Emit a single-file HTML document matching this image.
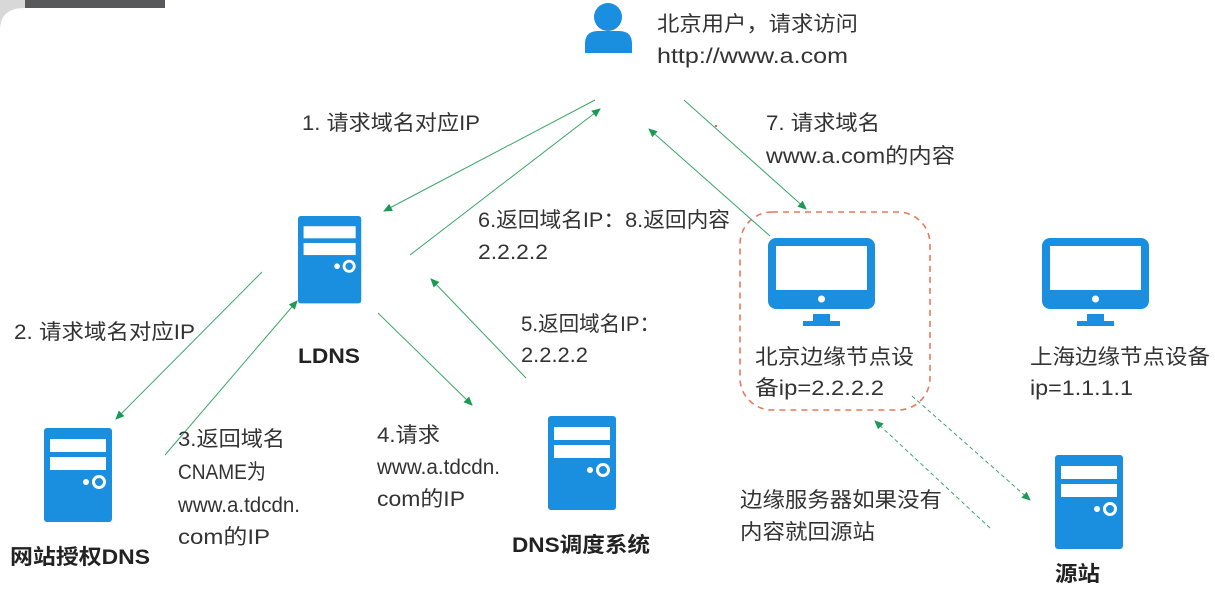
<!DOCTYPE html>
<html><head><meta charset="utf-8"><style>
html,body{margin:0;padding:0;background:#fff;}
svg{display:block;}
text{font-family:"Liberation Sans","Noto Sans CJK SC",sans-serif;fill:#333;font-size:21px;}
.b{font-weight:bold;fill:#222;}
</style></head><body>
<svg width="1215" height="592" viewBox="0 0 1215 592" xmlns="http://www.w3.org/2000/svg">
<defs>
<marker id="ah" markerWidth="10" markerHeight="10" refX="8" refY="5" orient="auto" markerUnits="userSpaceOnUse">
<path d="M0,1 L9,5 L0,9 Z" fill="#1a9a55"/></marker>
<g id="srv">
<rect x="0" y="0" width="68" height="94" rx="3" fill="#1a8fe0"/>
<rect x="6" y="11" width="56" height="13" fill="#fff"/>
<rect x="6" y="29" width="56" height="13" fill="#fff"/>
<circle cx="42" cy="54" r="3" fill="#fff"/>
<circle cx="55" cy="54" r="5.5" fill="none" stroke="#fff" stroke-width="3"/>
</g>
<g id="mon">
<rect x="0" y="0" width="107" height="71" rx="8" fill="#1a8fe0"/>
<rect x="8" y="8" width="91" height="44" fill="#fff"/>
<circle cx="53.5" cy="61" r="3.5" fill="#fff"/>
<rect x="45" y="76" width="17" height="9" fill="#1a8fe0"/>
<rect x="35" y="83" width="37" height="5" fill="#1a8fe0"/>
</g>
</defs>
<rect x="0" y="0" width="30" height="30" fill="#d8d8d8"/>
<path d="M0,30 Q0,8 25,8 L30,8 L30,30 Z" fill="#fff"/>
<rect x="25" y="0" width="140" height="8" fill="#58595b"/>

<circle cx="608" cy="17" r="14" fill="#1a8fe0"/>
<path d="M585,53 L585,44 Q585,31 598,31 L619,31 Q632,31 632,44 L632,53 Z" fill="#1a8fe0"/>

<use href="#srv" transform="translate(298,216) scale(0.93)"/>
<use href="#srv" x="44" y="428"/>
<use href="#srv" x="548" y="416"/>
<use href="#srv" x="1055" y="455"/>
<use href="#mon" x="768" y="238"/>
<use href="#mon" x="1042" y="238"/>

<rect x="740" y="212" width="190" height="198" rx="32" fill="none" stroke="#e8785a" stroke-width="1.6" stroke-dasharray="6,5"/>

<g stroke="#3aa66a" stroke-width="1" fill="none" marker-end="url(#ah)">
<line x1="595" y1="100" x2="384" y2="211"/>
<line x1="410" y1="255" x2="600" y2="109"/>
<line x1="684" y1="100" x2="806" y2="209"/>
<line x1="770" y1="236" x2="649" y2="129"/>
<line x1="262" y1="272" x2="116" y2="419"/>
<line x1="165" y1="455" x2="297" y2="301"/>
<line x1="378" y1="313" x2="472" y2="405"/>
<line x1="526" y1="378" x2="431" y2="279"/>
<line x1="912" y1="396" x2="1030" y2="500" stroke-dasharray="4,3"/>
<line x1="990" y1="528" x2="875" y2="421" stroke-dasharray="4,3"/>
</g>
<circle cx="716" cy="126" r="1" fill="#d33"/>

<g>
<text x="657" y="31" textLength="201" lengthAdjust="spacingAndGlyphs">北京用户，请求访问</text>
<text x="657" y="63" textLength="191" lengthAdjust="spacingAndGlyphs">http://www.a.com</text>
<text x="302" y="130" textLength="178" lengthAdjust="spacingAndGlyphs">1. 请求域名对应IP</text>
<text x="766" y="130" textLength="114" lengthAdjust="spacingAndGlyphs">7. 请求域名</text>
<text x="766" y="163" textLength="189" lengthAdjust="spacingAndGlyphs">www.a.com的内容</text>
<text x="478" y="227" textLength="252" lengthAdjust="spacingAndGlyphs">6.返回域名IP：8.返回内容</text>
<text x="478" y="259" textLength="70" lengthAdjust="spacingAndGlyphs">2.2.2.2</text>
<text x="14" y="339" textLength="181" lengthAdjust="spacingAndGlyphs">2. 请求域名对应IP</text>
<text x="298" y="363" class="b" textLength="62" lengthAdjust="spacingAndGlyphs">LDNS</text>
<text x="521" y="331" textLength="139" lengthAdjust="spacingAndGlyphs">5.返回域名IP：</text>
<text x="521" y="362" textLength="67" lengthAdjust="spacingAndGlyphs">2.2.2.2</text>
<text x="755" y="364" textLength="159" lengthAdjust="spacingAndGlyphs">北京边缘节点设</text>
<text x="755" y="395" textLength="129" lengthAdjust="spacingAndGlyphs">备ip=2.2.2.2</text>
<text x="1030" y="364" textLength="180" lengthAdjust="spacingAndGlyphs">上海边缘节点设备</text>
<text x="1030" y="395" textLength="103" lengthAdjust="spacingAndGlyphs">ip=1.1.1.1</text>
<text x="178" y="446" textLength="107" lengthAdjust="spacingAndGlyphs">3.返回域名</text>
<text x="178" y="479" textLength="88" lengthAdjust="spacingAndGlyphs">CNAME为</text>
<text x="178" y="512" textLength="122" lengthAdjust="spacingAndGlyphs">www.a.tdcdn.</text>
<text x="178" y="544" textLength="92" lengthAdjust="spacingAndGlyphs">com的IP</text>
<text x="377" y="442" textLength="63" lengthAdjust="spacingAndGlyphs">4.请求</text>
<text x="377" y="474" textLength="123" lengthAdjust="spacingAndGlyphs">www.a.tdcdn.</text>
<text x="377" y="506" textLength="88" lengthAdjust="spacingAndGlyphs">com的IP</text>
<text x="10" y="564" class="b" textLength="140" lengthAdjust="spacingAndGlyphs">网站授权DNS</text>
<text x="512" y="552" class="b" textLength="138" lengthAdjust="spacingAndGlyphs">DNS调度系统</text>
<text x="740" y="507" textLength="202" lengthAdjust="spacingAndGlyphs">边缘服务器如果没有</text>
<text x="740" y="539" textLength="135" lengthAdjust="spacingAndGlyphs">内容就回源站</text>
<text x="1055" y="581" class="b" textLength="45" lengthAdjust="spacingAndGlyphs">源站</text>
</g>
</svg>
</body></html>
